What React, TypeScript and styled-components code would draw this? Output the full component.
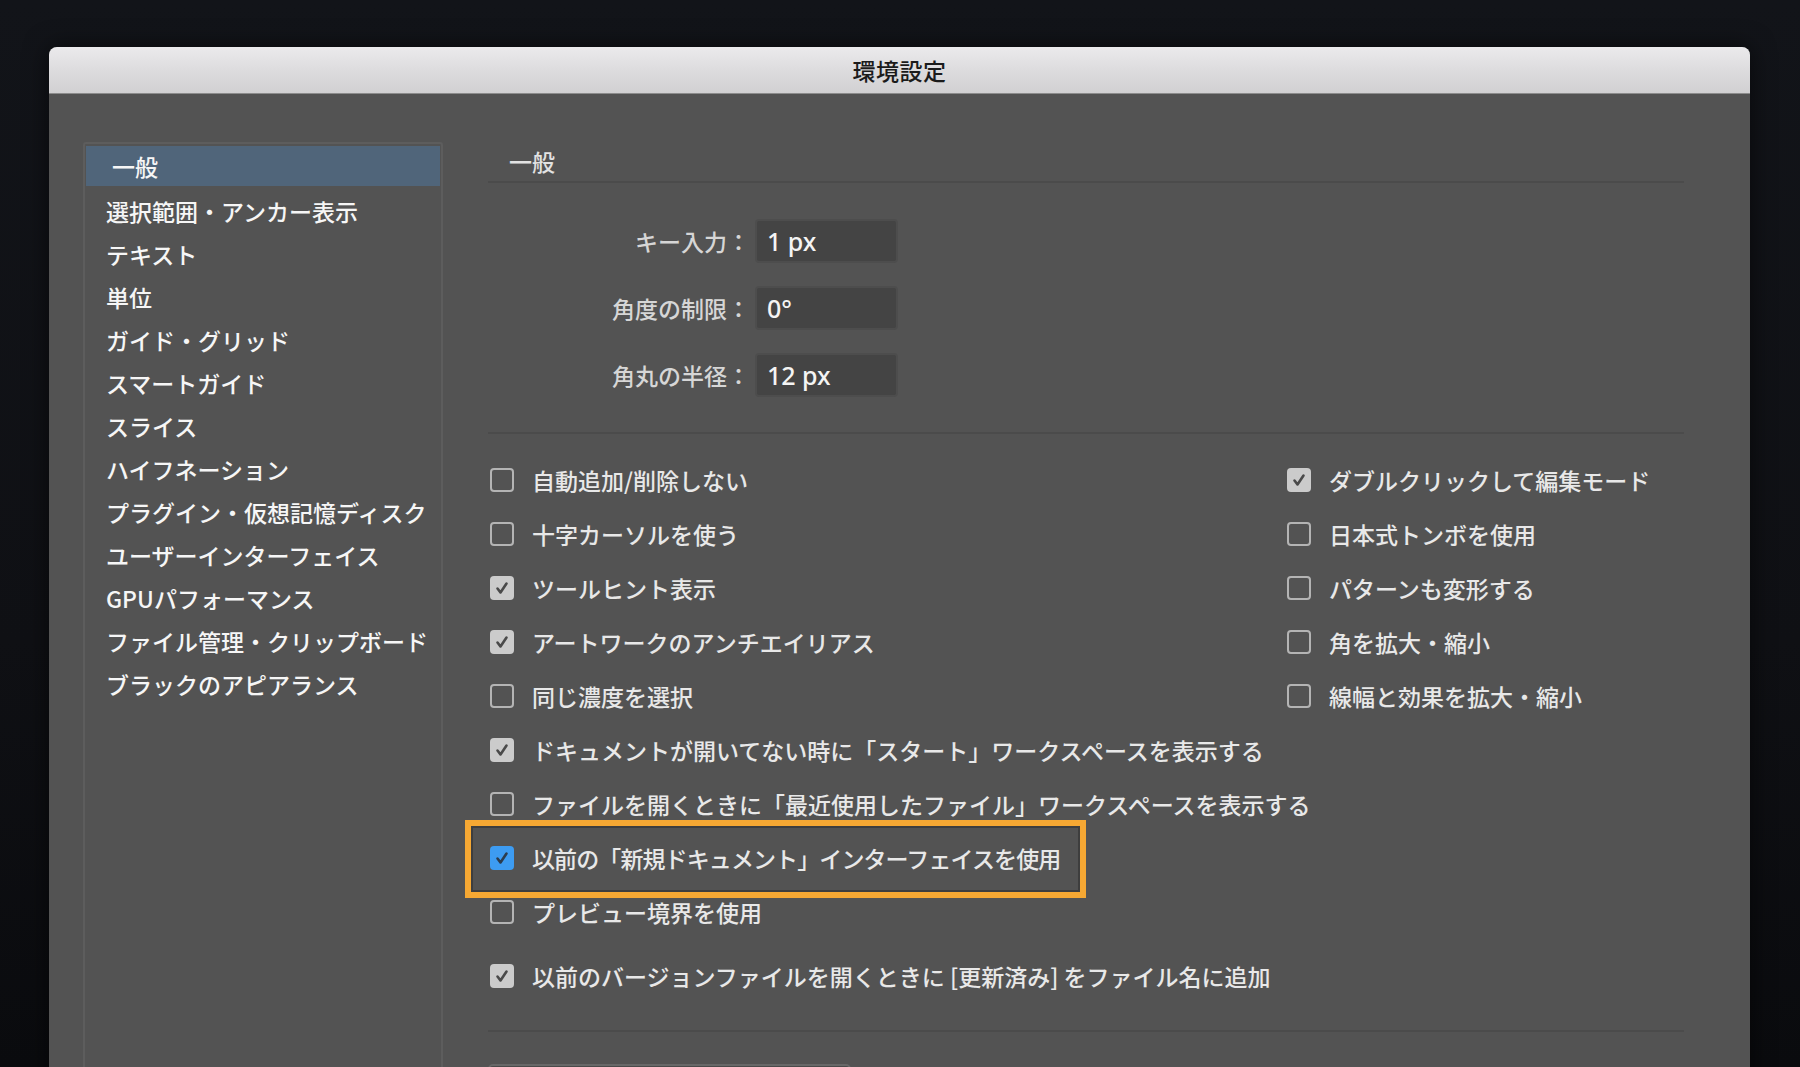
import React from 'react';
import styled, { createGlobalStyle, css } from 'styled-components';

const GlobalStyle = createGlobalStyle`
  html, body {
    margin: 0;
    padding: 0;
    background: #0d0e12;
  }
  body {
    font-family: "Noto Sans CJK JP", "Noto Sans", sans-serif;
  }
`;

type BoxState = 'off' | 'on' | 'accent';

const sideItems = [
  '一般',
  '選択範囲・アンカー表示',
  'テキスト',
  '単位',
  'ガイド・グリッド',
  'スマートガイド',
  'スライス',
  'ハイフネーション',
  'プラグイン・仮想記憶ディスク',
  'ユーザーインターフェイス',
  'GPUパフォーマンス',
  'ファイル管理・クリップボード',
  'ブラックのアピアランス',
];

const fields = [
  { label: 'キー入力：', value: '1 px' },
  { label: '角度の制限：', value: '0°' },
  { label: '角丸の半径：', value: '12 px' },
];

const gridOptions: { text: string; state: BoxState }[] = [
  { text: '自動追加/削除しない', state: 'off' },
  { text: 'ダブルクリックして編集モード', state: 'on' },
  { text: '十字カーソルを使う', state: 'off' },
  { text: '日本式トンボを使用', state: 'off' },
  { text: 'ツールヒント表示', state: 'on' },
  { text: 'パターンも変形する', state: 'off' },
  { text: 'アートワークのアンチエイリアス', state: 'on' },
  { text: '角を拡大・縮小', state: 'off' },
  { text: '同じ濃度を選択', state: 'off' },
  { text: '線幅と効果を拡大・縮小', state: 'off' },
];

const Page = styled.div`
  height: 1067px;
  overflow: hidden;
  padding: 47px 50px 0 49px;
  box-sizing: border-box;
  background: linear-gradient(180deg, #121419 0%, #0f1014 60%, #0a0b0e 100%);
`;

const Window = styled.div`
  width: 1701px;
  height: 1100px;
  background: #535353;
  border-radius: 8px 8px 0 0;
  overflow: hidden;
  box-shadow: 0 0 24px rgba(0, 0, 0, 0.6);
`;

const TitleBar = styled.div`
  height: 46px;
  display: flex;
  align-items: center;
  justify-content: center;
  background: linear-gradient(180deg, #ebeaec 0%, #dddcde 50%, #d1d0d2 100%);
  border-bottom: 1px solid #8c8c8c;
  color: #1b1b1b;
  font-size: 23px;
  font-weight: 500;
  letter-spacing: 0.5px;
`;

const Body = styled.div`
  display: flex;
  padding: 48px 66px 0 34px;
  gap: 45px;
`;

const Sidebar = styled.div`
  width: 360px;
  height: 1000px;
  box-sizing: border-box;
  border: 2px solid #5d5d5d;
  border-radius: 3px;
  padding: 2px 1px;
  display: flex;
  flex-direction: column;
`;

const SideItem = styled.div<{ $active?: boolean }>`
  height: 43px;
  display: flex;
  align-items: center;
  padding-left: 20px;
  color: #f6f6f6;
  font-size: 23px;
  font-weight: 500;
  white-space: nowrap;
  ${(p) =>
    p.$active &&
    css`
      height: 40px;
      margin-bottom: 3px;
      padding-left: 26px;
      background: #50657a;
    `}
`;

const Content = styled.div`
  flex: 1;
  display: flex;
  flex-direction: column;
`;

const SectionHeader = styled.div`
  height: 37px;
  padding: 0 0 2px 21px;
  display: flex;
  align-items: center;
  color: #e2e2e2;
  font-size: 23px;
  font-weight: 500;
  border-bottom: 2px solid #4b4b4b;
`;

const Fields = styled.div`
  display: flex;
  flex-direction: column;
  gap: 23px;
  padding: 36px 0 35px;
  border-bottom: 2px solid #4b4b4b;
`;

const FieldRow = styled.div`
  display: flex;
  align-items: center;
  gap: 5px;
`;

const FieldLabel = styled.div`
  width: 262px;
  text-align: right;
  color: #d6d6d6;
  font-size: 23px;
  font-weight: 500;
`;

const FieldInput = styled.div`
  width: 143px;
  height: 44px;
  box-sizing: border-box;
  display: flex;
  align-items: center;
  padding-left: 10px;
  background: #444444;
  border: 2px solid #4d4d4d;
  border-radius: 4px;
  color: #f4f4f4;
  font-family: "Noto Sans", "Open Sans", sans-serif;
  font-size: 25px;
  font-weight: 500;
`;

const Options = styled.div`
  padding: 19px 0 27px 2px;
  border-bottom: 2px solid #4b4b4b;
`;

const OptionGrid = styled.div`
  display: grid;
  grid-template-columns: 797px 1fr;
`;

const OptionRow = styled.div<{ $gapTop?: boolean; $tight?: boolean }>`
  position: relative;
  height: 54px;
  display: flex;
  align-items: center;
  gap: 18px;
  color: #e8e8e8;
  font-size: 23px;
  font-weight: 500;
  white-space: nowrap;
  margin-top: ${(p) => (p.$gapTop ? '10px' : '0')};
  letter-spacing: ${(p) => (p.$tight ? '-0.9px' : '0')};
`;

const Highlight = styled.div`
  position: absolute;
  left: -25px;
  top: -11px;
  width: 621px;
  height: 78px;
  box-sizing: border-box;
  border: 6px solid #f6a833;
  box-shadow: inset 0 0 0 2px #3e3e3e;
  pointer-events: none;
`;

const Box = styled.span<{ $state: BoxState }>`
  width: 24px;
  height: 24px;
  box-sizing: border-box;
  flex-shrink: 0;
  border-radius: 4px;
  display: flex;
  align-items: center;
  justify-content: center;
  ${(p) =>
    p.$state === 'off'
      ? css`
          border: 2px solid #b4b4b4;
        `
      : p.$state === 'on'
      ? css`
          background: #cbcbcb;
          color: #4a4a4a;
        `
      : css`
          background: #3d9cf2;
          color: #2c3c4e;
        `}
`;

const BottomBox = styled.div`
  margin-top: 32px;
  width: 363px;
  height: 40px;
  box-sizing: border-box;
  border: 2px solid #686868;
  border-radius: 5px;
  background: #4a4a4a;
`;

const Check: React.FC<{ state: BoxState }> = ({ state }) => (
  <Box $state={state}>
    {state !== 'off' && (
      <svg width="18" height="18" viewBox="0 0 18 18">
        <path
          d="M4.5 9.5 L7.5 13.5 L13.5 4.5"
          fill="none"
          stroke="currentColor"
          strokeWidth="2.6"
          strokeLinecap="round"
          strokeLinejoin="round"
        />
      </svg>
    )}
  </Box>
);

const App: React.FC = () => {
  return (
    <>
      <GlobalStyle />
      <Page>
        <Window>
          <TitleBar>環境設定</TitleBar>
          <Body>
            <Sidebar>
              {sideItems.map((item, i) => (
                <SideItem key={item} $active={i === 0}>
                  {item}
                </SideItem>
              ))}
            </Sidebar>
            <Content>
              <SectionHeader>一般</SectionHeader>
              <Fields>
                {fields.map((f) => (
                  <FieldRow key={f.label}>
                    <FieldLabel>{f.label}</FieldLabel>
                    <FieldInput>{f.value}</FieldInput>
                  </FieldRow>
                ))}
              </Fields>
              <Options>
                <OptionGrid>
                  {gridOptions.map((o) => (
                    <OptionRow key={o.text}>
                      <Check state={o.state} />
                      {o.text}
                    </OptionRow>
                  ))}
                </OptionGrid>
                <OptionRow>
                  <Check state="on" />
                  ドキュメントが開いてない時に「スタート」ワークスペースを表示する
                </OptionRow>
                <OptionRow>
                  <Check state="off" />
                  ファイルを開くときに「最近使用したファイル」ワークスペースを表示する
                </OptionRow>
                <OptionRow $tight>
                  <Check state="accent" />
                  以前の「新規ドキュメント」インターフェイスを使用
                  <Highlight />
                </OptionRow>
                <OptionRow>
                  <Check state="off" />
                  プレビュー境界を使用
                </OptionRow>
                <OptionRow $gapTop>
                  <Check state="on" />
                  以前のバージョンファイルを開くときに [更新済み] をファイル名に追加
                </OptionRow>
              </Options>
              <BottomBox />
            </Content>
          </Body>
        </Window>
      </Page>
    </>
  );
};

export default App;
